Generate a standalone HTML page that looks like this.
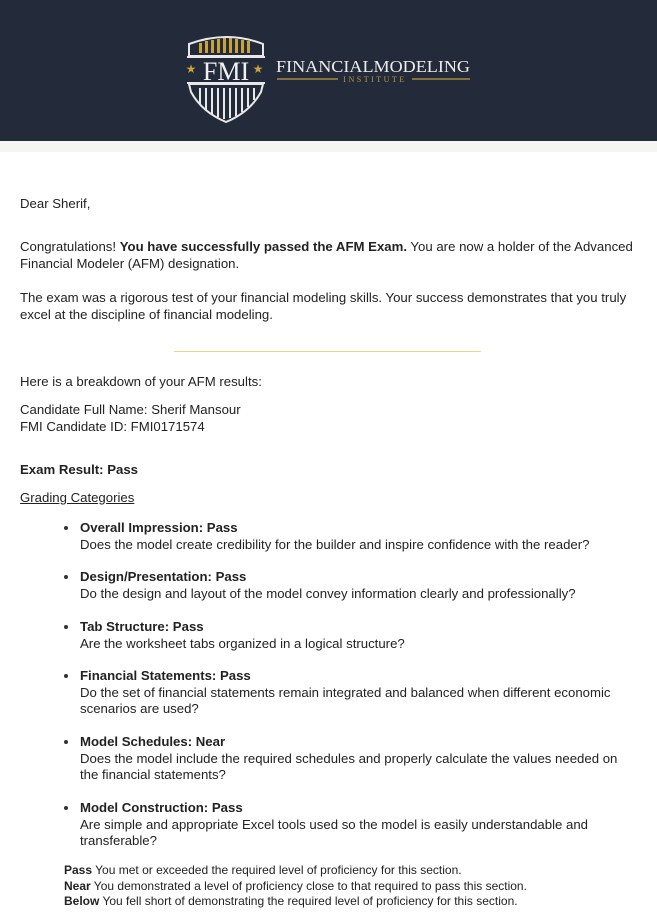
<!DOCTYPE html>
<html><head><meta charset="utf-8"><style>
body{margin:0;width:657px;height:912px;background:#fff;position:relative;overflow:hidden;font-family:"Liberation Sans",Arial,sans-serif;color:#222;}
.hd{position:absolute;left:0;top:0;width:657px;height:141px;background:#232b3a;}
.strip{position:absolute;left:0;top:141px;width:657px;height:11px;background:#f5f5f3;}
.t{position:absolute;left:20px;font-size:13.2px;line-height:16.5px;white-space:nowrap;}
.b{position:absolute;left:80px;font-size:13.2px;line-height:16.5px;white-space:nowrap;}
.dot{position:absolute;left:64px;width:4px;height:4px;border-radius:50%;background:#333;}
.f{position:absolute;left:64px;font-size:12px;line-height:15.5px;white-space:nowrap;}
</style></head><body>
<div class="hd">
<svg width="657" height="141" style="position:absolute;left:0;top:0">
 <path d="M189 44 Q227 30 263 44 L263 56 L189 56 Z" fill="none" stroke="#e8e8e8" stroke-width="2"/>
 <g fill="#c9a23a">
  <rect x="199" y="43" width="3" height="10"/><rect x="205" y="41" width="3" height="12"/><rect x="211" y="40" width="3" height="13"/><rect x="217" y="39" width="3" height="14"/><rect x="223" y="38" width="3" height="15"/><rect x="229" y="38" width="3" height="15"/><rect x="235" y="39" width="3" height="14"/><rect x="241" y="40" width="3" height="13"/><rect x="247" y="41" width="3" height="12"/>
 </g>
 <rect x="187" y="56" width="78" height="2" fill="#e8e8e8"/>
 <rect x="187" y="82" width="78" height="2" fill="#e8e8e8"/>
 <path d="M189 84 L263 84 L261 92 Q250 112 226 122 Q202 112 191 92 Z" fill="none" stroke="#e8e8e8" stroke-width="2"/>
 <g stroke="#e8e8e8" stroke-width="2">
  <line x1="200" y1="88" x2="200" y2="104"/><line x1="206" y1="88" x2="206" y2="110"/><line x1="212" y1="88" x2="212" y2="114"/><line x1="218" y1="88" x2="218" y2="117"/><line x1="224" y1="88" x2="224" y2="119"/><line x1="230" y1="88" x2="230" y2="118"/><line x1="236" y1="88" x2="236" y2="116"/><line x1="242" y1="88" x2="242" y2="112"/><line x1="248" y1="88" x2="248" y2="107"/><line x1="254" y1="88" x2="254" y2="100"/>
 </g>
 <text x="226" y="80" text-anchor="middle" font-family="Liberation Serif,serif" font-size="26" fill="#f0f0f0">FMI</text>
 <text x="191" y="73" text-anchor="middle" font-size="12" fill="#c9a23a">★</text>
 <text x="258" y="73" text-anchor="middle" font-size="12" fill="#c9a23a">★</text>
 <text x="276" y="72" font-family="Liberation Serif,serif" font-size="17" fill="#ececec" textLength="194" lengthAdjust="spacingAndGlyphs">FINANCIALMODELING</text>
 <line x1="277" y1="79" x2="338" y2="79" stroke="#a88a3a" stroke-width="1.5"/>
 <line x1="412" y1="79" x2="470" y2="79" stroke="#a88a3a" stroke-width="1.5"/>
 <text x="375" y="82" text-anchor="middle" font-family="Liberation Serif,serif" font-size="8" fill="#b8963e" letter-spacing="2.5">INSTITUTE</text>
</svg>
</div>
<div class="strip"></div>

<div class="t" style="top:196px">Dear Sherif,</div>
<div class="t" style="top:239px">Congratulations! <b>You have successfully passed the AFM Exam.</b> You are now a holder of the Advanced<br>Financial Modeler (AFM) designation.</div>
<div class="t" style="top:290px">The exam was a rigorous test of your financial modeling skills. Your success demonstrates that you truly<br>excel at the discipline of financial modeling.</div>
<div style="position:absolute;left:174px;top:351px;width:307px;height:1px;background:#edd77f"></div>
<div class="t" style="top:374px">Here is a breakdown of your AFM results:</div>
<div class="t" style="top:402px">Candidate Full Name: Sherif Mansour<br>FMI Candidate ID: FMI0171574</div>
<div class="t" style="top:462px"><b>Exam Result: Pass</b></div>
<div class="t" style="top:490px;text-decoration:underline">Grading Categories</div>

<div class="dot" style="top:526px"></div>
<div class="b" style="top:520px"><b>Overall Impression: Pass</b><br>Does the model create credibility for the builder and inspire confidence with the reader?</div>
<div class="dot" style="top:575px"></div>
<div class="b" style="top:569px"><b>Design/Presentation: Pass</b><br>Do the design and layout of the model convey information clearly and professionally?</div>
<div class="dot" style="top:625px"></div>
<div class="b" style="top:619px"><b>Tab Structure: Pass</b><br>Are the worksheet tabs organized in a logical structure?</div>
<div class="dot" style="top:674px"></div>
<div class="b" style="top:668px"><b>Financial Statements: Pass</b><br>Do the set of financial statements remain integrated and balanced when different economic<br>scenarios are used?</div>
<div class="dot" style="top:740px"></div>
<div class="b" style="top:734px"><b>Model Schedules: Near</b><br>Does the model include the required schedules and properly calculate the values needed on<br>the financial statements?</div>
<div class="dot" style="top:806px"></div>
<div class="b" style="top:800px"><b>Model Construction: Pass</b><br>Are simple and appropriate Excel tools used so the model is easily understandable and<br>transferable?</div>

<div class="f" style="top:863px"><b>Pass</b> You met or exceeded the required level of proficiency for this section.<br><b>Near</b> You demonstrated a level of proficiency close to that required to pass this section.<br><b>Below</b> You fell short of demonstrating the required level of proficiency for this section.</div>
</body></html>
